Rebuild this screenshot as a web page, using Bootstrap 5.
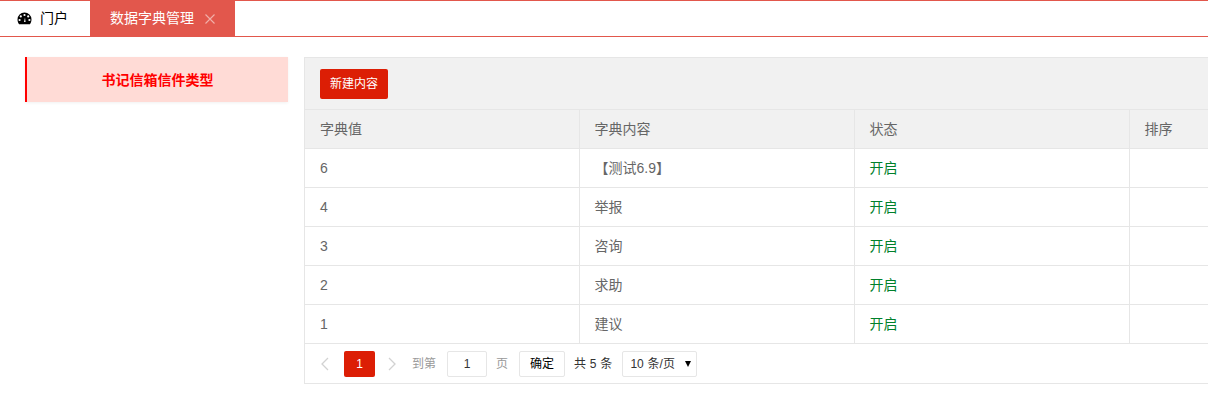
<!DOCTYPE html>
<html lang="zh">
<head>
<meta charset="utf-8">
<title>数据字典管理</title>
<link href="https://cdn.jsdelivr.net/npm/bootstrap@5.3.0/dist/css/bootstrap.min.css" rel="stylesheet">
<style>
html,body{height:100%;overflow:hidden}
body{background:#fff;font-family:"Liberation Sans","Noto Sans CJK SC",sans-serif;font-size:14px;color:#666}
.topbar{height:37px;border-top:1px solid #e2574c;border-bottom:1px solid #e2574c}
.tab-home{width:90px;color:#000;padding-left:17px;gap:8px}
.tab-on{width:145px;background:#e2574c;color:#fff;padding-left:20px}
.tab-x{margin-left:11px;line-height:0}
.content{padding:20px 0 0 25px;gap:16px}
.side{width:263px;flex:none}
.side-item{height:45px;border-left:2px solid #f00;background:#ffdbd6;color:#f00;font-weight:700;box-shadow:0 1px 3px rgba(0,0,0,.06);padding-top:2px}
.panel-box{flex:1 1 0;min-width:0;overflow:hidden;border:1px solid #e6e6e6;border-right:0}
.tool{height:51px;background:#f1f1f1;padding-left:15px;padding-top:1px}
.add-btn{background:#dc1e05;color:#fff;font-size:12px;height:30px;width:68px;padding:0;border:0;border-radius:2px}
.add-btn:hover{background:#dc1e05;color:#fff}
.dict{table-layout:fixed;width:1199px;margin:0;border-collapse:collapse;color:#666}
.dict th,.dict td{height:39px;padding:0 15px;border:1px solid #e6e6e6;border-left:0;font-weight:400;color:#666;box-shadow:none;background:transparent;vertical-align:middle;line-height:20px}
.dict th{background:#f1f1f1}
.dict tr:last-child td{border-bottom:1px solid #e6e6e6}
.dict .on{color:#00802b}
.pager{height:39px;padding-left:15px;font-size:12px;color:#999}
.arrow{width:12px;line-height:0}
.page-cur{width:31px;height:26px;background:#dc1e05;color:#fff;border-radius:2px;margin:0 12px 0 12px}
.go{margin-left:13px}
.page-in{width:40px;height:26px;border:1px solid #e6e6e6;border-radius:2px;color:#333;margin:0 9px 0 11px}
.ok-btn{width:46px;height:26px;border:1px solid #e6e6e6;border-radius:2px;background:#fff;color:#000;padding:0;font-size:12px;margin:0 9px 0 11px}
.total{color:#333;margin-right:10px;word-spacing:.5px}
.size-sel{width:75px;height:26px;border:1px solid #e6e6e6;border-radius:2px;color:#333;padding-left:7px;padding-right:5px;word-spacing:.5px}
.caret-d{width:0;height:0;border:3.5px solid transparent;border-top:6px solid #000;border-bottom:0}
</style>
</head>
<body>
<div class="topbar d-flex">
  <div class="tab-home d-flex align-items-center">
    <svg width="15" height="13" viewBox="0 0 15 13"><path fill="#000" d="M7.5 0.5A7 7 0 0 0 .5 7.500c0 1.900.6 3.500 1.600 4.700h10.800c1-1.200 1.600-2.800 1.600-4.700a7 7 0 0 0-7-7z"/><circle cx="7.500" cy="3" r="1.100" fill="#fff"/><circle cx="3.800" cy="4.400" r="1.100" fill="#fff"/><circle cx="11.200" cy="4.400" r="1.100" fill="#fff"/><circle cx="2.600" cy="8" r="1.100" fill="#fff"/><circle cx="12.400" cy="8" r="1.100" fill="#fff"/><path d="M7 10l1-4.500 .6 4.500z" fill="#fff"/></svg>
    <span>门户</span>
  </div>
  <div class="tab-on d-flex align-items-center">
    <span>数据字典管理</span>
    <span class="tab-x"><svg width="10" height="10" viewBox="0 0 10 10"><path d="M.5.5l9 9M9.500.5l-9 9" stroke="#f0b0aa" stroke-width="1.100" fill="none"/></svg></span>
  </div>
</div>
<div class="content d-flex align-items-start">
  <div class="side">
    <div class="side-item d-flex align-items-center justify-content-center">书记信箱信件类型</div>
  </div>
  <div class="panel-box">
    <div class="tool d-flex align-items-center"><button type="button" class="btn add-btn">新建内容</button></div>
    <table class="table dict">
      <colgroup><col style="width:274px"><col style="width:275px"><col style="width:275px"><col style="width:375px"></colgroup>
      <thead><tr><th>字典值</th><th>字典内容</th><th>状态</th><th>排序</th></tr></thead>
      <tbody>
        <tr><td>6</td><td>【测试6.9】</td><td class="on">开启</td><td></td></tr>
        <tr><td>4</td><td>举报</td><td class="on">开启</td><td></td></tr>
        <tr><td>3</td><td>咨询</td><td class="on">开启</td><td></td></tr>
        <tr><td>2</td><td>求助</td><td class="on">开启</td><td></td></tr>
        <tr><td>1</td><td>建议</td><td class="on">开启</td><td></td></tr>
      </tbody>
    </table>
    <div class="pager d-flex align-items-center">
      <span class="arrow"><svg width="10" height="14" viewBox="0 0 10 14"><path d="M8 1L2 7l6 6" stroke="#d2d2d2" stroke-width="1.300" fill="none"/></svg></span>
      <span class="page-cur d-flex align-items-center justify-content-center">1</span>
      <span class="arrow"><svg width="10" height="14" viewBox="0 0 10 14"><path d="M2 1l6 6-6 6" stroke="#d2d2d2" stroke-width="1.300" fill="none"/></svg></span>
      <span class="go">到第</span>
      <span class="page-in d-flex align-items-center justify-content-center">1</span>
      <span>页</span>
      <button type="button" class="ok-btn">确定</button>
      <span class="total">共 5 条</span>
      <span class="size-sel d-flex align-items-center justify-content-between"><span>10 条/页</span><i class="caret-d"></i></span>
    </div>
  </div>
</div>
</body>
</html>
